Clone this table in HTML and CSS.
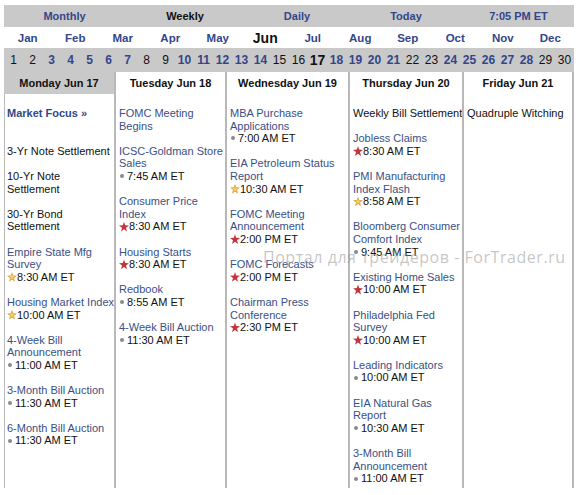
FILE: index.html
```html
<!DOCTYPE html>
<html>
<head>
<meta charset="utf-8">
<link rel="stylesheet" href="styles.css">
</head>
<body>
<div class="cal">
  <div class="nav">
    <a class="nav-item n1">Monthly</a>
    <span class="nav-item n2 cur">Weekly</span>
    <a class="nav-item n3">Daily</a>
    <a class="nav-item n4">Today</a>
    <a class="nav-item n5">7:05 PM ET</a>
  </div>
  <div class="months">
    <a>Jan</a><a>Feb</a><a>Mar</a><a>Apr</a><a>May</a><span class="cur">Jun</span><a>Jul</a><a>Aug</a><a>Sep</a><a>Oct</a><a>Nov</a><a>Dec</a>
  </div>
  <div class="days">
    <span>1</span><span>2</span><a>3</a><a>4</a><a>5</a><a>6</a><a>7</a><span>8</span><span>9</span><a>10</a><a>11</a><a>12</a><a>13</a><a>14</a><span>15</span><span>16</span><span class="cur">17</span><a>18</a><a>19</a><a>20</a><a>21</a><span>22</span><span>23</span><a>24</a><a>25</a><a>26</a><a>27</a><a>28</a><span>29</span><span>30</span>
  </div>
  <div class="week">
    <div class="col c1 past">
      <div class="head">Monday Jun 17</div>
      <div class="body">
        <div class="ev focus"><a>Market Focus »</a></div>
        <div class="ev plain">3-Yr Note Settlement</div>
        <div class="ev plain">10-Yr Note<br>Settlement</div>
        <div class="ev plain">30-Yr Bond<br>Settlement</div>
        <div class="ev"><a>Empire State Mfg<br>Survey</a><div class="t"><i class="star gold"></i>8:30 AM ET</div></div>
        <div class="ev"><a>Housing Market Index</a><div class="t"><i class="star gold"></i>10:00 AM ET</div></div>
        <div class="ev"><a>4-Week Bill<br>Announcement</a><div class="t"><i class="dot"></i>11:00 AM ET</div></div>
        <div class="ev"><a>3-Month Bill Auction</a><div class="t"><i class="dot"></i>11:30 AM ET</div></div>
        <div class="ev"><a>6-Month Bill Auction</a><div class="t"><i class="dot"></i>11:30 AM ET</div></div>
      </div>
    </div>
    <div class="col c2">
      <div class="head">Tuesday Jun 18</div>
      <div class="body">
        <div class="ev"><a>FOMC Meeting<br>Begins</a></div>
        <div class="ev"><a>ICSC-Goldman Store<br>Sales</a><div class="t"><i class="dot"></i>7:45 AM ET</div></div>
        <div class="ev"><a>Consumer Price<br>Index</a><div class="t"><i class="star red"></i>8:30 AM ET</div></div>
        <div class="ev"><a>Housing Starts</a><div class="t"><i class="star red"></i>8:30 AM ET</div></div>
        <div class="ev"><a>Redbook</a><div class="t"><i class="dot"></i>8:55 AM ET</div></div>
        <div class="ev"><a>4-Week Bill Auction</a><div class="t"><i class="dot"></i>11:30 AM ET</div></div>
      </div>
    </div>
    <div class="col c3">
      <div class="head">Wednesday Jun 19</div>
      <div class="body">
        <div class="ev"><a>MBA Purchase<br>Applications</a><div class="t"><i class="dot"></i>7:00 AM ET</div></div>
        <div class="ev"><a>EIA Petroleum Status<br>Report</a><div class="t"><i class="star gold"></i>10:30 AM ET</div></div>
        <div class="ev"><a>FOMC Meeting<br>Announcement</a><div class="t"><i class="star red"></i>2:00 PM ET</div></div>
        <div class="ev"><a>FOMC Forecasts</a><div class="t"><i class="star red"></i>2:00 PM ET</div></div>
        <div class="ev"><a>Chairman Press<br>Conference</a><div class="t"><i class="star red"></i>2:30 PM ET</div></div>
      </div>
    </div>
    <div class="col c4">
      <div class="head">Thursday Jun 20</div>
      <div class="body">
        <div class="ev plain">Weekly Bill Settlement</div>
        <div class="ev"><a>Jobless Claims</a><div class="t"><i class="star red"></i>8:30 AM ET</div></div>
        <div class="ev"><a>PMI Manufacturing<br>Index Flash</a><div class="t"><i class="star gold"></i>8:58 AM ET</div></div>
        <div class="ev"><a>Bloomberg Consumer<br>Comfort Index</a><div class="t"><i class="dot"></i>9:45 AM ET</div></div>
        <div class="ev"><a>Existing Home Sales</a><div class="t"><i class="star red"></i>10:00 AM ET</div></div>
        <div class="ev"><a>Philadelphia Fed<br>Survey</a><div class="t"><i class="star red"></i>10:00 AM ET</div></div>
        <div class="ev"><a>Leading Indicators</a><div class="t"><i class="dot"></i>10:00 AM ET</div></div>
        <div class="ev"><a>EIA Natural Gas<br>Report</a><div class="t"><i class="dot"></i>10:30 AM ET</div></div>
        <div class="ev"><a>3-Month Bill<br>Announcement</a><div class="t"><i class="dot"></i>11:00 AM ET</div></div>
      </div>
    </div>
    <div class="col c5">
      <div class="head">Friday Jun 21</div>
      <div class="body">
        <div class="ev plain">Quadruple Witching</div>
      </div>
    </div>
  </div>
  <div class="watermark">Портал для трейдеров - ForTrader.ru</div>
</div>
</body>
</html>
```

FILE: styles.css
```css
* { box-sizing: border-box; }
html, body { margin: 0; padding: 0; background: #fff; }
body {
  font-family: "Liberation Sans", Arial, sans-serif;
  font-size: 11px;
  color: #111;
}
a { color: #3a4f86; text-decoration: none; }

.cal {
  position: relative;
  margin: 5px 4px 0 4px;
  width: 570px;
}

.nav {
  display: grid;
  grid-template-columns: 121px 120px 104px 114px 111px;
  background: #c9c9c9;
  height: 22px;
  align-items: center;
  text-align: center;
  font-weight: bold;
  font-size: 11px;
}
.nav a { color: #33468a; }
.nav .cur { color: #111; }

.months {
  display: grid;
  grid-template-columns: repeat(12, 1fr);
  height: 21px;
  align-items: center;
  text-align: center;
  font-weight: bold;
  font-size: 11.5px;
}
.months a { color: #33468a; }
.months .cur { color: #111; font-size: 14px; }

.days {
  display: grid;
  grid-template-columns: repeat(30, 1fr);
  height: 23px;
  background: #c9c9c9;
  align-items: center;
  text-align: center;
  font-size: 12px;
  color: #111;
}
.days a { color: #33468a; font-weight: bold; }
.days .cur { font-weight: bold; font-size: 14px; }

.week {
  display: grid;
  grid-template-columns: 110px 111px 123px 114px 112px;
  background: #c9c9c9;
}
.col {
  display: flex;
  flex-direction: column;
  border-left: 2px solid #b9b9b9;
  background: #fff;
  margin-top: 1px;
}
.col.c1 { margin-top: 0; border-left: none; background: #c9c9c9; }
.col.c5 { border-right: 2px solid #b9b9b9; }
.head {
  height: 22px;
  display: flex;
  align-items: center;
  justify-content: center;
  font-weight: bold;
  font-size: 11px;
  background: #fff;
}
.past .head { background: #c9c9c9; height: 23px; }
.body {
  background: #fff;
  height: 394px;
  padding: 13px 2px 0 3px;
  line-height: 12.6px;
}
.past .body { border-left: 1px solid #b9b9b9; padding-left: 2px; margin-left: 0; }
.ev { margin-bottom: 12.6px; white-space: nowrap; }
.ev.focus { margin-bottom: 25.2px; }
.ev.focus a { font-weight: bold; color: #2f4a86; }
.ev.plain { color: #111; }
.t { color: #111; display: flex; align-items: center; }

.dot {
  display: inline-block;
  width: 4px;
  height: 4px;
  border-radius: 50%;
  background: #8a8a8a;
  margin: 0 3px 0 1px;
}
.star {
  display: inline-block;
  width: 10px;
  height: 10px;
  margin-right: 0;
  clip-path: polygon(50% 0%, 62% 35%, 100% 38%, 70% 60%, 80% 98%, 50% 76%, 20% 98%, 30% 60%, 0% 38%, 38% 35%);
}
.star.red { background: #c1363d; }
.star.gold { background: #d9a23a; position: relative; }
.star.gold::after {
  content: "";
  position: absolute;
  inset: 2px;
  background: #f6d070;
  clip-path: polygon(50% 0%, 62% 35%, 100% 38%, 70% 60%, 80% 98%, 50% 76%, 20% 98%, 30% 60%, 0% 38%, 38% 35%);
}

.watermark {
  position: absolute;
  left: 259px;
  top: 241px;
  font-family: "Open Sans", "DejaVu Sans", sans-serif;
  font-size: 16px;
  color: rgba(150, 150, 150, 0.55);
  white-space: nowrap;
  letter-spacing: 0.55px;
  pointer-events: none;
}
```
